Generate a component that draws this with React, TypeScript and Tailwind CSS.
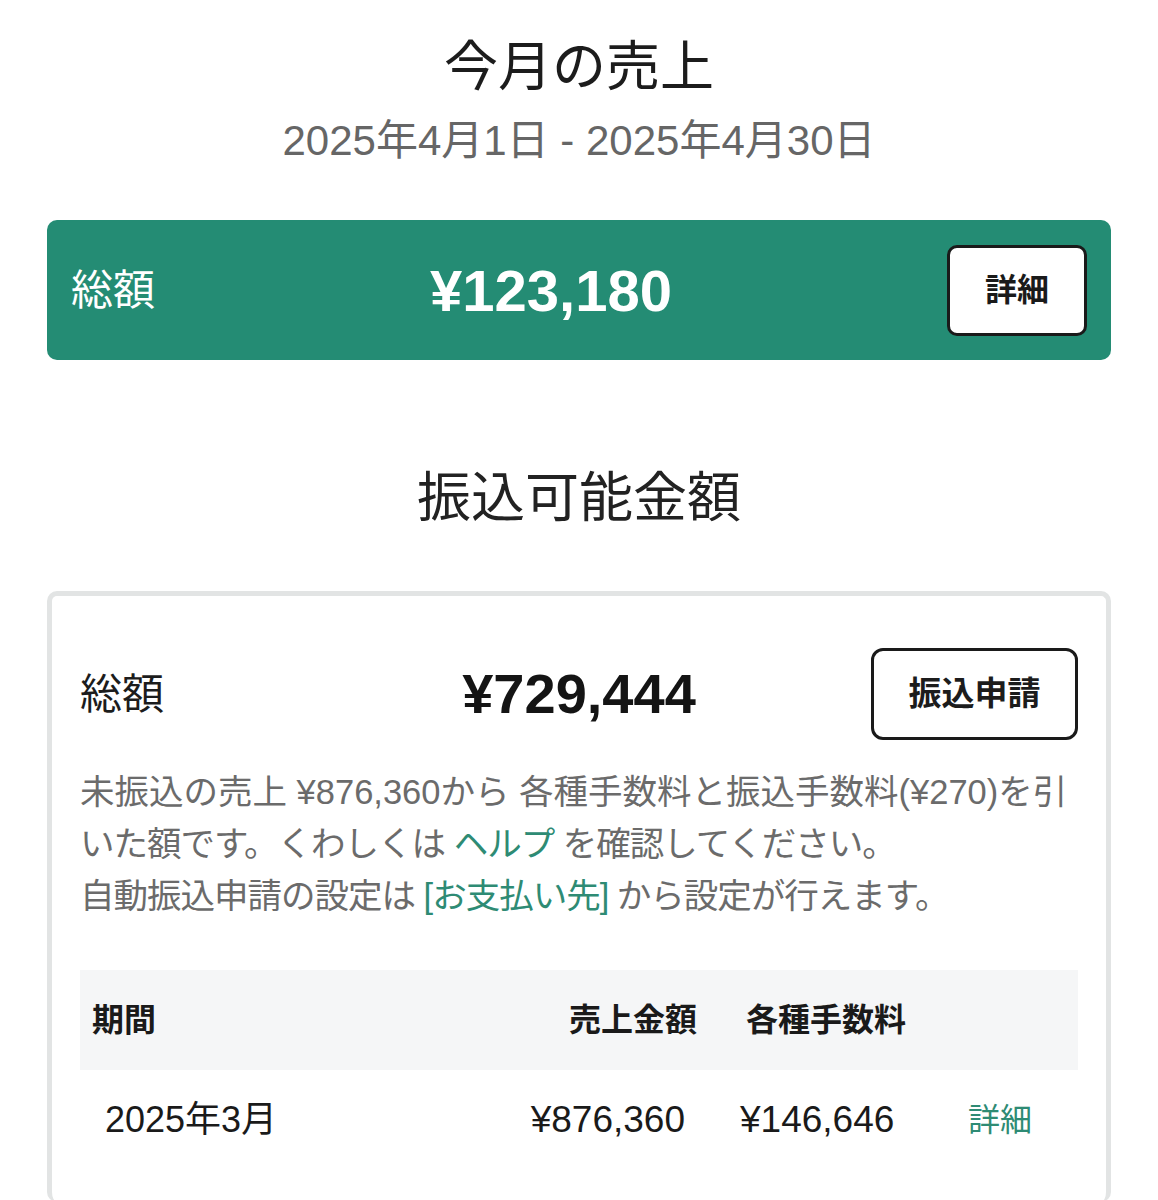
export default function App() {
  return (
    <div className="min-h-[1200px] bg-white px-[47px] font-['Liberation_Sans','Noto_Sans_CJK_JP',sans-serif] text-[#1c1c1c]">
      <h1 className="mt-[35px] text-center text-[54px] leading-[64px] font-normal">今月の売上</h1>
      <p className="mt-[17px] text-center text-[42px] leading-[50px] text-[#666]">2025年4月1日 - 2025年4月30日</p>

      <div className="mt-[54px] flex h-[140px] items-center rounded-[10px] bg-[#248c74] px-6 text-white">
        <span className="text-[42px]">総額</span>
        <span className="flex-1 text-center text-[58px] font-bold">¥123,180</span>
        <button className="flex h-[91px] w-[140px] items-center justify-center rounded-[10px] border-[3px] border-[#1a1a1a] bg-white text-[32px] font-bold text-[#1a1a1a]">
          詳細
        </button>
      </div>

      <h2 className="mt-[106px] text-center text-[54px] leading-[64px] font-normal text-[#222]">振込可能金額</h2>

      <div className="mt-[61px] rounded-[10px] border-[5px] border-b-0 border-[#e2e4e4] px-7 pt-[52px] pb-8">
        <div className="grid h-[92px] grid-cols-[1fr_auto_1fr] items-center">
          <span className="text-[42px]">総額</span>
          <span className="text-[56px] font-bold text-[#141414]">¥729,444</span>
          <button className="flex h-[92px] w-[207px] items-center justify-center justify-self-end rounded-[12px] border-[3px] border-[#1a1a1a] bg-white text-[33px] font-bold">
            振込申請
          </button>
        </div>

        <p className="mt-[26px] text-[34.5px] leading-[52px] whitespace-nowrap text-[#6b6b6b]">
          未振込の売上 ¥876,360から 各種手数料と振込手数料(¥270)を引
          <br />
          <span className="tracking-[-1px]">
            いた額です。くわしくは <a className="text-[#2e8b74]">ヘルプ</a> を確認してください。
          </span>
          <br />
          <span className="tracking-[-1px]">
            自動振込申請の設定は <a className="text-[#2e8b74]">[お支払い先]</a> から設定が行えます。
          </span>
        </p>

        <div className="mt-[48px]">
          <div className="grid h-[100px] grid-cols-[400px_217px_253px_1fr] items-center bg-[#f5f6f7] text-[32px] font-bold text-[#1a1a1a]">
            <span className="pl-3">期間</span>
            <span className="text-right">売上金額</span>
            <span className="pl-[49px]">各種手数料</span>
            <span />
          </div>
          <div className="grid h-[100px] grid-cols-[400px_217px_253px_1fr] items-center text-[37px] text-[#1a1a1a]">
            <span className="pl-[25px] text-[36px]">2025年3月</span>
            <span className="pr-3 text-right">¥876,360</span>
            <span className="pl-[43px]">¥146,646</span>
            <a className="pl-[18px] text-[32px] text-[#2e8b74]">詳細</a>
          </div>
        </div>
      </div>
    </div>
  );
}
